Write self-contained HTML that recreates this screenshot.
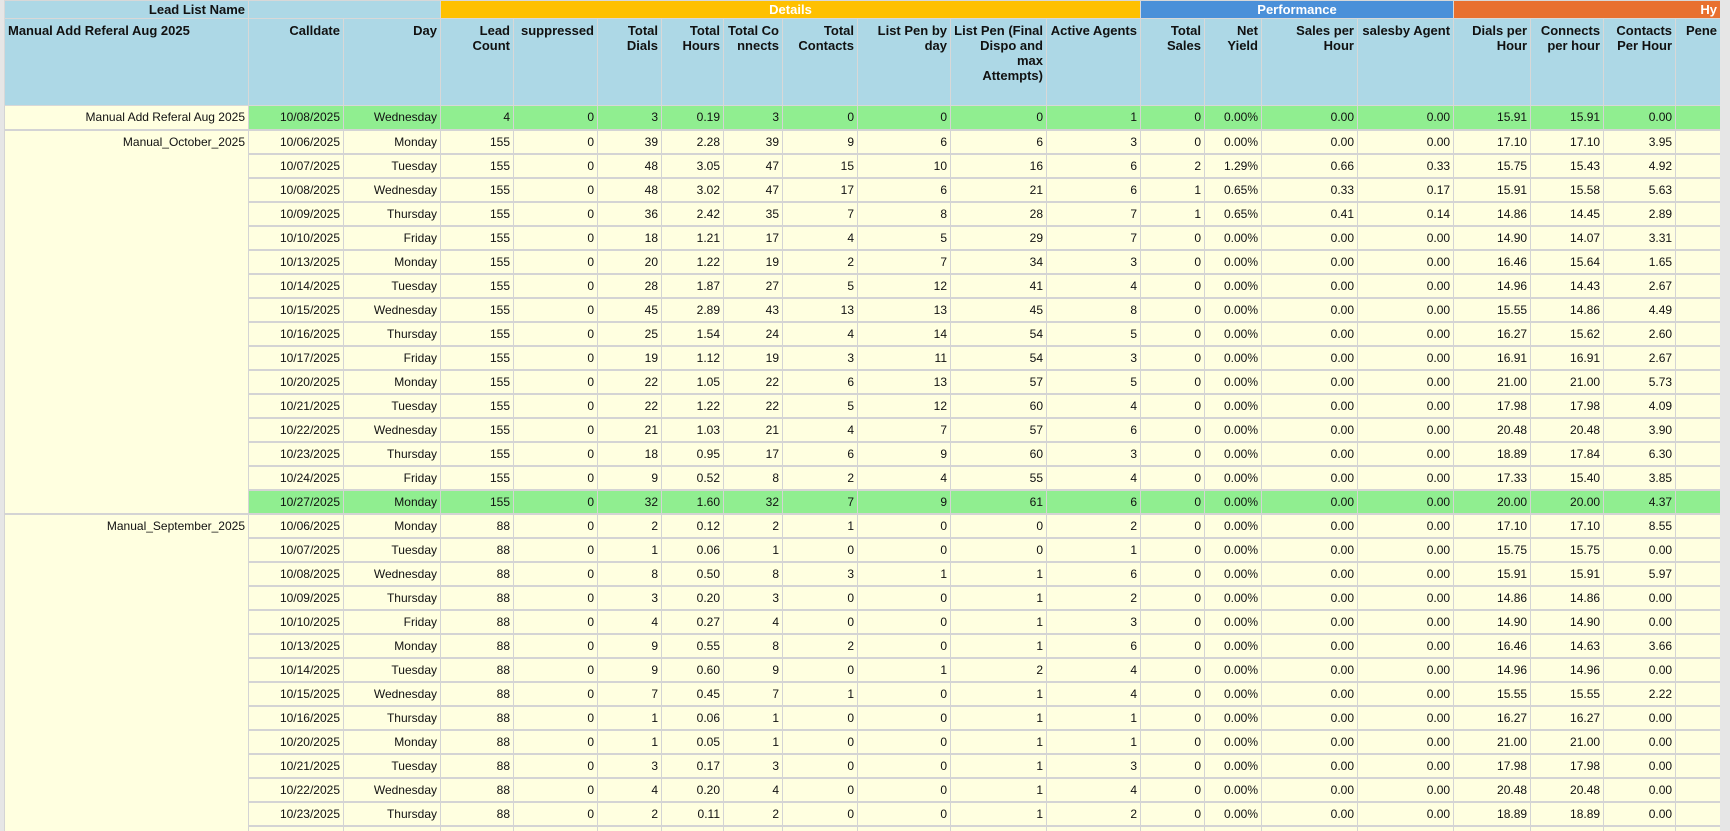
<!DOCTYPE html>
<html><head><meta charset="utf-8"><style>
html,body{margin:0;padding:0;width:1730px;height:831px;overflow:hidden;background:#e6e6e6;}
.wrap{position:absolute;left:4px;top:0;width:1716px;height:831px;overflow:hidden;background:#ffffe0;}
table{border-collapse:collapse;table-layout:fixed;width:1716px;font-family:"Liberation Sans",Arial,sans-serif;font-size:12px;color:#111;}
td,th{overflow:hidden;white-space:nowrap;padding:0 3px;text-align:right;vertical-align:top;box-sizing:border-box;}
td{height:24px;padding-top:4px;padding-bottom:0;border:1px solid #d4d4d4;border-bottom:2px solid #d4d4d4;background:#ffffe0;line-height:14px;}
th{background:#add8e6;font-weight:bold;font-size:13px;border:1px solid #d8d8d8;line-height:15px;white-space:normal;word-break:break-all;}
tr.g th{height:18px;padding:0 3px;vertical-align:middle;color:#fff;word-break:normal;}
tr.h th{height:87px;padding-top:4px;}
tr.gr td{background:#90ee90;}
td.n{background:#ffffe0 !important;}
.sep{border-left:1px solid #777 !important;}
</style></head><body><div class="wrap"><table>
<colgroup><col style="width:244px"><col style="width:95px"><col style="width:97px"><col style="width:73px"><col style="width:84px"><col style="width:64px"><col style="width:62px"><col style="width:59px"><col style="width:75px"><col style="width:93px"><col style="width:96px"><col style="width:94px"><col style="width:64px"><col style="width:57px"><col style="width:96px"><col style="width:96px"><col style="width:77px"><col style="width:73px"><col style="width:72px"><col style="width:45px"></colgroup>
<tr class="g"><th style="color:#111">Lead List Name</th><th colspan="2"></th><th colspan="9" style="background:#ffc000;text-align:center">Details</th><th colspan="4" class="sep" style="background:#4a90d9;text-align:center">Performance</th><th colspan="4" class="sep" style="background:#e8702f;text-align:right">Hy</th></tr>
<tr class="h"><th style="text-align:left;word-break:normal">Manual Add Referal Aug 2025</th><th>Calldate</th><th>Day</th><th style="word-break:normal">Lead Count</th><th>suppressed</th><th style="word-break:normal">Total Dials</th><th style="word-break:normal">Total Hours</th><th>Total Connects</th><th style="word-break:normal">Total Contacts</th><th style="word-break:normal">List Pen by day</th><th style="word-break:normal">List Pen (Final Dispo and max Attempts)</th><th style="word-break:normal">Active Agents</th><th class="sep" style="word-break:normal">Total Sales</th><th style="word-break:normal">Net Yield</th><th style="word-break:normal">Sales per Hour</th><th style="word-break:normal">salesby Agent</th><th class="sep" style="word-break:normal">Dials per Hour</th><th style="word-break:normal">Connects per hour</th><th style="word-break:normal">Contacts Per Hour</th><th>Pene</th></tr>
<tr class="gr"><td class="n">Manual Add Referal Aug 2025</td><td>10/08/2025</td><td>Wednesday</td><td>4</td><td>0</td><td>3</td><td>0.19</td><td>3</td><td>0</td><td>0</td><td>0</td><td>1</td><td class="sep">0</td><td>0.00%</td><td>0.00</td><td>0.00</td><td class="sep">15.91</td><td>15.91</td><td>0.00</td><td></td></tr>
<tr><td class="n" rowspan="16">Manual_October_2025</td><td>10/06/2025</td><td>Monday</td><td>155</td><td>0</td><td>39</td><td>2.28</td><td>39</td><td>9</td><td>6</td><td>6</td><td>3</td><td class="sep">0</td><td>0.00%</td><td>0.00</td><td>0.00</td><td class="sep">17.10</td><td>17.10</td><td>3.95</td><td></td></tr>
<tr><td>10/07/2025</td><td>Tuesday</td><td>155</td><td>0</td><td>48</td><td>3.05</td><td>47</td><td>15</td><td>10</td><td>16</td><td>6</td><td class="sep">2</td><td>1.29%</td><td>0.66</td><td>0.33</td><td class="sep">15.75</td><td>15.43</td><td>4.92</td><td></td></tr>
<tr><td>10/08/2025</td><td>Wednesday</td><td>155</td><td>0</td><td>48</td><td>3.02</td><td>47</td><td>17</td><td>6</td><td>21</td><td>6</td><td class="sep">1</td><td>0.65%</td><td>0.33</td><td>0.17</td><td class="sep">15.91</td><td>15.58</td><td>5.63</td><td></td></tr>
<tr><td>10/09/2025</td><td>Thursday</td><td>155</td><td>0</td><td>36</td><td>2.42</td><td>35</td><td>7</td><td>8</td><td>28</td><td>7</td><td class="sep">1</td><td>0.65%</td><td>0.41</td><td>0.14</td><td class="sep">14.86</td><td>14.45</td><td>2.89</td><td></td></tr>
<tr><td>10/10/2025</td><td>Friday</td><td>155</td><td>0</td><td>18</td><td>1.21</td><td>17</td><td>4</td><td>5</td><td>29</td><td>7</td><td class="sep">0</td><td>0.00%</td><td>0.00</td><td>0.00</td><td class="sep">14.90</td><td>14.07</td><td>3.31</td><td></td></tr>
<tr><td>10/13/2025</td><td>Monday</td><td>155</td><td>0</td><td>20</td><td>1.22</td><td>19</td><td>2</td><td>7</td><td>34</td><td>3</td><td class="sep">0</td><td>0.00%</td><td>0.00</td><td>0.00</td><td class="sep">16.46</td><td>15.64</td><td>1.65</td><td></td></tr>
<tr><td>10/14/2025</td><td>Tuesday</td><td>155</td><td>0</td><td>28</td><td>1.87</td><td>27</td><td>5</td><td>12</td><td>41</td><td>4</td><td class="sep">0</td><td>0.00%</td><td>0.00</td><td>0.00</td><td class="sep">14.96</td><td>14.43</td><td>2.67</td><td></td></tr>
<tr><td>10/15/2025</td><td>Wednesday</td><td>155</td><td>0</td><td>45</td><td>2.89</td><td>43</td><td>13</td><td>13</td><td>45</td><td>8</td><td class="sep">0</td><td>0.00%</td><td>0.00</td><td>0.00</td><td class="sep">15.55</td><td>14.86</td><td>4.49</td><td></td></tr>
<tr><td>10/16/2025</td><td>Thursday</td><td>155</td><td>0</td><td>25</td><td>1.54</td><td>24</td><td>4</td><td>14</td><td>54</td><td>5</td><td class="sep">0</td><td>0.00%</td><td>0.00</td><td>0.00</td><td class="sep">16.27</td><td>15.62</td><td>2.60</td><td></td></tr>
<tr><td>10/17/2025</td><td>Friday</td><td>155</td><td>0</td><td>19</td><td>1.12</td><td>19</td><td>3</td><td>11</td><td>54</td><td>3</td><td class="sep">0</td><td>0.00%</td><td>0.00</td><td>0.00</td><td class="sep">16.91</td><td>16.91</td><td>2.67</td><td></td></tr>
<tr><td>10/20/2025</td><td>Monday</td><td>155</td><td>0</td><td>22</td><td>1.05</td><td>22</td><td>6</td><td>13</td><td>57</td><td>5</td><td class="sep">0</td><td>0.00%</td><td>0.00</td><td>0.00</td><td class="sep">21.00</td><td>21.00</td><td>5.73</td><td></td></tr>
<tr><td>10/21/2025</td><td>Tuesday</td><td>155</td><td>0</td><td>22</td><td>1.22</td><td>22</td><td>5</td><td>12</td><td>60</td><td>4</td><td class="sep">0</td><td>0.00%</td><td>0.00</td><td>0.00</td><td class="sep">17.98</td><td>17.98</td><td>4.09</td><td></td></tr>
<tr><td>10/22/2025</td><td>Wednesday</td><td>155</td><td>0</td><td>21</td><td>1.03</td><td>21</td><td>4</td><td>7</td><td>57</td><td>6</td><td class="sep">0</td><td>0.00%</td><td>0.00</td><td>0.00</td><td class="sep">20.48</td><td>20.48</td><td>3.90</td><td></td></tr>
<tr><td>10/23/2025</td><td>Thursday</td><td>155</td><td>0</td><td>18</td><td>0.95</td><td>17</td><td>6</td><td>9</td><td>60</td><td>3</td><td class="sep">0</td><td>0.00%</td><td>0.00</td><td>0.00</td><td class="sep">18.89</td><td>17.84</td><td>6.30</td><td></td></tr>
<tr><td>10/24/2025</td><td>Friday</td><td>155</td><td>0</td><td>9</td><td>0.52</td><td>8</td><td>2</td><td>4</td><td>55</td><td>4</td><td class="sep">0</td><td>0.00%</td><td>0.00</td><td>0.00</td><td class="sep">17.33</td><td>15.40</td><td>3.85</td><td></td></tr>
<tr class="gr"><td>10/27/2025</td><td>Monday</td><td>155</td><td>0</td><td>32</td><td>1.60</td><td>32</td><td>7</td><td>9</td><td>61</td><td>6</td><td class="sep">0</td><td>0.00%</td><td>0.00</td><td>0.00</td><td class="sep">20.00</td><td>20.00</td><td>4.37</td><td></td></tr>
<tr><td class="n" rowspan="14">Manual_September_2025</td><td>10/06/2025</td><td>Monday</td><td>88</td><td>0</td><td>2</td><td>0.12</td><td>2</td><td>1</td><td>0</td><td>0</td><td>2</td><td class="sep">0</td><td>0.00%</td><td>0.00</td><td>0.00</td><td class="sep">17.10</td><td>17.10</td><td>8.55</td><td></td></tr>
<tr><td>10/07/2025</td><td>Tuesday</td><td>88</td><td>0</td><td>1</td><td>0.06</td><td>1</td><td>0</td><td>0</td><td>0</td><td>1</td><td class="sep">0</td><td>0.00%</td><td>0.00</td><td>0.00</td><td class="sep">15.75</td><td>15.75</td><td>0.00</td><td></td></tr>
<tr><td>10/08/2025</td><td>Wednesday</td><td>88</td><td>0</td><td>8</td><td>0.50</td><td>8</td><td>3</td><td>1</td><td>1</td><td>6</td><td class="sep">0</td><td>0.00%</td><td>0.00</td><td>0.00</td><td class="sep">15.91</td><td>15.91</td><td>5.97</td><td></td></tr>
<tr><td>10/09/2025</td><td>Thursday</td><td>88</td><td>0</td><td>3</td><td>0.20</td><td>3</td><td>0</td><td>0</td><td>1</td><td>2</td><td class="sep">0</td><td>0.00%</td><td>0.00</td><td>0.00</td><td class="sep">14.86</td><td>14.86</td><td>0.00</td><td></td></tr>
<tr><td>10/10/2025</td><td>Friday</td><td>88</td><td>0</td><td>4</td><td>0.27</td><td>4</td><td>0</td><td>0</td><td>1</td><td>3</td><td class="sep">0</td><td>0.00%</td><td>0.00</td><td>0.00</td><td class="sep">14.90</td><td>14.90</td><td>0.00</td><td></td></tr>
<tr><td>10/13/2025</td><td>Monday</td><td>88</td><td>0</td><td>9</td><td>0.55</td><td>8</td><td>2</td><td>0</td><td>1</td><td>6</td><td class="sep">0</td><td>0.00%</td><td>0.00</td><td>0.00</td><td class="sep">16.46</td><td>14.63</td><td>3.66</td><td></td></tr>
<tr><td>10/14/2025</td><td>Tuesday</td><td>88</td><td>0</td><td>9</td><td>0.60</td><td>9</td><td>0</td><td>1</td><td>2</td><td>4</td><td class="sep">0</td><td>0.00%</td><td>0.00</td><td>0.00</td><td class="sep">14.96</td><td>14.96</td><td>0.00</td><td></td></tr>
<tr><td>10/15/2025</td><td>Wednesday</td><td>88</td><td>0</td><td>7</td><td>0.45</td><td>7</td><td>1</td><td>0</td><td>1</td><td>4</td><td class="sep">0</td><td>0.00%</td><td>0.00</td><td>0.00</td><td class="sep">15.55</td><td>15.55</td><td>2.22</td><td></td></tr>
<tr><td>10/16/2025</td><td>Thursday</td><td>88</td><td>0</td><td>1</td><td>0.06</td><td>1</td><td>0</td><td>0</td><td>1</td><td>1</td><td class="sep">0</td><td>0.00%</td><td>0.00</td><td>0.00</td><td class="sep">16.27</td><td>16.27</td><td>0.00</td><td></td></tr>
<tr><td>10/20/2025</td><td>Monday</td><td>88</td><td>0</td><td>1</td><td>0.05</td><td>1</td><td>0</td><td>0</td><td>1</td><td>1</td><td class="sep">0</td><td>0.00%</td><td>0.00</td><td>0.00</td><td class="sep">21.00</td><td>21.00</td><td>0.00</td><td></td></tr>
<tr><td>10/21/2025</td><td>Tuesday</td><td>88</td><td>0</td><td>3</td><td>0.17</td><td>3</td><td>0</td><td>0</td><td>1</td><td>3</td><td class="sep">0</td><td>0.00%</td><td>0.00</td><td>0.00</td><td class="sep">17.98</td><td>17.98</td><td>0.00</td><td></td></tr>
<tr><td>10/22/2025</td><td>Wednesday</td><td>88</td><td>0</td><td>4</td><td>0.20</td><td>4</td><td>0</td><td>0</td><td>1</td><td>4</td><td class="sep">0</td><td>0.00%</td><td>0.00</td><td>0.00</td><td class="sep">20.48</td><td>20.48</td><td>0.00</td><td></td></tr>
<tr><td>10/23/2025</td><td>Thursday</td><td>88</td><td>0</td><td>2</td><td>0.11</td><td>2</td><td>0</td><td>0</td><td>1</td><td>2</td><td class="sep">0</td><td>0.00%</td><td>0.00</td><td>0.00</td><td class="sep">18.89</td><td>18.89</td><td>0.00</td><td></td></tr>
<tr><td>10/24/2025</td><td>Friday</td><td>88</td><td>0</td><td>1</td><td>0.06</td><td>1</td><td>0</td><td>0</td><td>1</td><td>1</td><td class="sep">0</td><td>0.00%</td><td>0.00</td><td>0.00</td><td class="sep">17.33</td><td>17.33</td><td>0.00</td><td></td></tr>
</table></div></body></html>
